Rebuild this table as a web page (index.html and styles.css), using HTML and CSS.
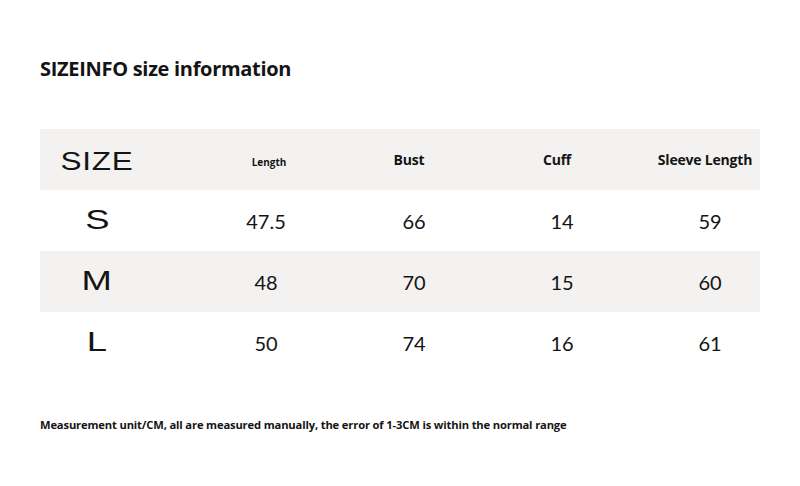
FILE: index.html
```html
<!DOCTYPE html>
<html lang="en">
<head>
<meta charset="utf-8">
<title>SIZEINFO size information</title>
<link rel="stylesheet" href="styles.css">
</head>
<body>
<main class="page">
  <h1 class="title">SIZEINFO size information</h1>
  <section class="table">
    <div class="row head">
      <div class="cell first"><span class="size-word">SIZE</span></div>
      <div class="cell"><span class="h-small">Length</span></div>
      <div class="cell"><span class="h-big">Bust</span></div>
      <div class="cell"><span class="h-big">Cuff</span></div>
      <div class="cell last"><span class="h-big">Sleeve Length</span></div>
    </div>
    <div class="row">
      <div class="cell first"><span class="letter">S</span></div>
      <div class="cell num">47.5</div>
      <div class="cell num">66</div>
      <div class="cell num">14</div>
      <div class="cell last num">59</div>
    </div>
    <div class="row shade">
      <div class="cell first"><span class="letter">M</span></div>
      <div class="cell num">48</div>
      <div class="cell num">70</div>
      <div class="cell num">15</div>
      <div class="cell last num">60</div>
    </div>
    <div class="row">
      <div class="cell first"><span class="letter">L</span></div>
      <div class="cell num">50</div>
      <div class="cell num">74</div>
      <div class="cell num">16</div>
      <div class="cell last num">61</div>
    </div>
  </section>
  <p class="note">Measurement unit/CM, all are measured manually, the error of 1-3CM is within the normal range</p>
</main>
</body>
</html>
```

FILE: styles.css
```css
html, body {
  margin: 0;
  padding: 0;
  background: #ffffff;
}

body {
  font-family: "Open Sans", "Liberation Sans", sans-serif;
  color: #141414;
}

.page {
  width: 720px;
  padding: 55px 40px 0;
}

.title {
  margin: 0;
  font-size: 20px;
  line-height: 28px;
  font-weight: 700;
  letter-spacing: -0.3px;
}

.table {
  margin-top: 46px;
  display: flex;
  flex-direction: column;
}

.row {
  display: grid;
  grid-template-columns: 152px 148px 148px 148px 124px;
  height: 61px;
  align-items: center;
}

.head,
.shade {
  background: #f3f2f1;
}

.cell {
  text-align: center;
  white-space: nowrap;
}

.cell.first {
  padding-right: 38px;
}

.cell.last {
  padding-left: 24px;
}

.size-word {
  display: inline-block;
  font-family: "Liberation Sans", Arial, sans-serif;
  font-size: 25px;
  letter-spacing: 0.6px;
  transform: scaleX(1.26);
  position: relative;
  top: 2px;
}

.letter {
  display: inline-block;
  font-family: "Liberation Sans", Arial, sans-serif;
  font-size: 28px;
  font-weight: 400;
  transform: scaleX(1.3);
  position: relative;
  top: -1px;
}

.h-small {
  font-size: 10px;
  font-weight: 700;
  position: relative;
  left: 3px;
}

.h-big {
  font-size: 14px;
  font-weight: 700;
  letter-spacing: -0.2px;
  position: relative;
  left: -5px;
  top: -1px;
}

.num {
  font-family: "Lato", "Liberation Sans", sans-serif;
  font-size: 20px;
  font-weight: 400;
}

.note {
  margin: 44px 0 0;
  font-size: 11.2px;
  line-height: 16px;
  font-weight: 700;
  letter-spacing: -0.15px;
}
```
